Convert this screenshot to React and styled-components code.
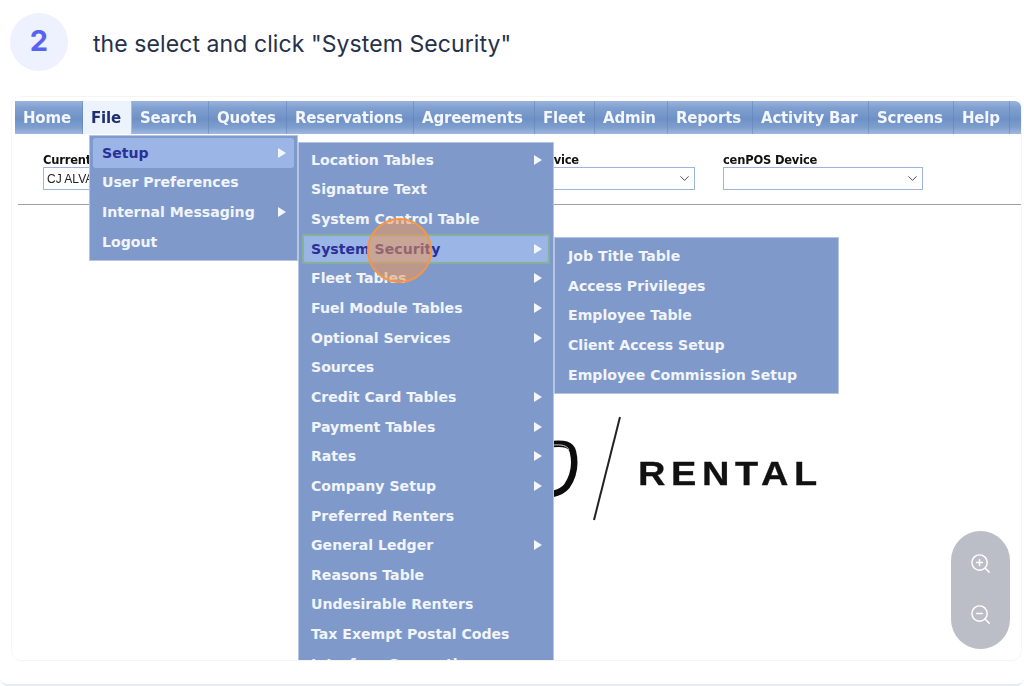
import React from 'react';
import styled, { createGlobalStyle } from 'styled-components';
import { ZoomIn, ZoomOut, ChevronDown } from 'lucide-react';

const Global = createGlobalStyle`
  html, body { margin: 0; padding: 0; background: #fff; }
  body { width: 1024px; height: 686px; overflow: hidden; }
`;

const Page = styled.div`
  width: 1024px;
  height: 686px;
  box-sizing: border-box;
  padding: 13px 2px 0 10px;
  border-bottom: 2px solid #e9eaf1;
  border-radius: 0 0 8px 8px;
  display: flex;
  flex-direction: column;
  gap: 25px;
`;

const Header = styled.header`
  display: flex;
  align-items: center;
  gap: 25px;
  height: 58px;
`;

const Badge = styled.div`
  width: 58px;
  height: 58px;
  border-radius: 50%;
  background: #eef1fe;
  color: #5a62f0;
  display: flex;
  align-items: center;
  justify-content: center;
  font: 700 29px "Inter", sans-serif;
  padding-bottom: 3px;
  box-sizing: border-box;
`;

const Title = styled.h2`
  margin: 0;
  padding-top: 3px;
  font: 400 23px "Inter", sans-serif;
  color: #26304a;
  letter-spacing: 0.08px;
`;

const Frame = styled.div`
  position: relative;
  height: 565px;
  box-sizing: border-box;
  padding: 4px 0 0 3px;
  margin-left: 1px;
  border: 1px solid #f5f5f6;
  border-radius: 10px;
  overflow: hidden;
`;

const Shot = styled.div`
  filter: blur(0.35px);
  height: 100%;
`;

const Bar = styled.nav`
  display: flex;
  height: 33px;
  background: linear-gradient(#9ab3dc 0%, #7f9fcf 22%, #6e91c5 55%, #7e9ece 80%, #a0b8e0 100%);
  border-radius: 0 6px 0 0;
`;

const BarItem = styled.div`
  width: ${p => p.$w}px;
  box-sizing: border-box;
  padding-left: 8px;
  display: flex;
  align-items: center;
  font: 700 15px "DejaVu Sans", sans-serif;
  letter-spacing: -0.2px;
  white-space: nowrap;
  color: ${p => (p.$active ? '#1f2f6f' : '#f3f6fc')};
  background: ${p => (p.$active ? '#edf3fd' : 'transparent')};
  border-right: 1px solid rgba(90, 125, 180, 0.45);
`;

const Form = styled.div`
  display: flex;
  gap: 28px;
  padding: 19px 0 0 25px;
  height: 71px;
  box-sizing: border-box;
  border-bottom: 1px solid #a0a0a0;
  margin-left: 3px;
`;

const Field = styled.div`
  width: ${p => p.$w}px;
  display: flex;
  flex-direction: column;
`;

const FieldLabel = styled.label`
  font: 700 11.5px "DejaVu Sans", sans-serif;
  letter-spacing: -0.2px;
  line-height: 14px;
  color: #111;
  white-space: nowrap;
`;

const SelectBox = styled.div`
  height: 23px;
  box-sizing: border-box;
  border: 1px solid #9db4dc;
  background: #fff;
  display: flex;
  align-items: center;
  justify-content: space-between;
  padding: 0 2px 0 3px;
  font: 400 12px "Liberation Sans", sans-serif;
  color: #222;
`;

const LogoRow = styled.div`
  display: flex;
  align-items: center;
  padding: 210px 0 0 538px;
`;

const LogoText = styled.span`
  font: 700 33px "Liberation Sans", sans-serif;
  letter-spacing: 4.9px;
  -webkit-text-stroke: 0.3px #111;
  color: #111;
  margin: 11px 0 0 15px;
  transform: scaleX(1.15);
  transform-origin: left center;
`;

const Menu = styled.div`
  position: absolute;
  left: ${p => p.$x}px;
  top: ${p => p.$y}px;
  width: ${p => p.$w}px;
  height: ${p => p.$h}px;
  box-sizing: border-box;
  overflow: hidden;
  background: #7f9aca;
  border: 1px solid #b5c5e3;
  border-bottom-width: ${p => (p.$clip ? 0 : 1)}px;
  padding: ${p => p.$pad}px ${p => p.$side}px 0;
`;

const Row = styled.div`
  height: 29.65px;
  box-sizing: border-box;
  display: flex;
  align-items: center;
  justify-content: space-between;
  padding: 0 8px 0 9px;
  font: 700 14.1px "DejaVu Sans", sans-serif;
  white-space: nowrap;
  border-radius: 3px;
  color: ${p => (p.$on ? '#2b2f97' : '#f1f4fb')};
  background: ${p => (p.$on ? '#9bb6e6' : 'transparent')};
  box-shadow: ${p => (p.$ring ? 'inset 0 0 1px 2px #84b09a' : 'none')};
`;

const Arrow = styled.i`
  width: 0;
  height: 0;
  border-left: 8px solid #f4f6fb;
  border-top: 5px solid transparent;
  border-bottom: 5px solid transparent;
`;

const Cursor = styled.div`
  position: absolute;
  left: 355px;
  top: 121px;
  width: 65px;
  height: 65px;
  box-sizing: border-box;
  border-radius: 50%;
  border: 2px solid #f4964a;
  background: rgba(244, 150, 80, 0.52);
`;

const ZoomPill = styled.div`
  position: absolute;
  left: 939px;
  top: 434px;
  width: 59px;
  height: 118px;
  border-radius: 30px;
  background: #bbbec6;
  display: flex;
  flex-direction: column;
  align-items: center;
  justify-content: center;
  gap: 28px;
  padding-bottom: 2px;
  box-sizing: border-box;
  color: #fff;
`;

const fileItems = [['Setup', 1], ['User Preferences'], ['Internal Messaging', 1], ['Logout']];
const setupItems = [
  ['Location Tables', 1], ['Signature Text'], ['System Control Table'], ['System Security', 1],
  ['Fleet Tables', 1], ['Fuel Module Tables', 1], ['Optional Services', 1], ['Sources'],
  ['Credit Card Tables', 1], ['Payment Tables', 1], ['Rates', 1], ['Company Setup', 1],
  ['Preferred Renters'], ['General Ledger', 1], ['Reasons Table'], ['Undesirable Renters'],
  ['Tax Exempt Postal Codes'], ['Interface Connections'],
];
const securityItems = ['Job Title Table', 'Access Privileges', 'Employee Table', 'Client Access Setup', 'Employee Commission Setup'];
const tabs = [
  ['Home', 68], ['File', 49], ['Search', 77], ['Quotes', 78], ['Reservations', 127], ['Agreements', 121],
  ['Fleet', 60], ['Admin', 73], ['Reports', 85], ['Activity Bar', 116], ['Screens', 85], ['Help', 56],
];

export default function App() {
  return (
    <Page>
      <Global />
      <Header>
        <Badge>2</Badge>
        <Title>the select and click "System Security"</Title>
      </Header>
      <Frame>
        <Shot>
          <Bar>
            {tabs.map(([t, w]) => <BarItem key={t} $w={w} $active={t === 'File'}>{t}</BarItem>)}
          </Bar>
          <Form>
            <Field $w={198}>
              <FieldLabel>Current Location</FieldLabel>
              <SelectBox>CJ ALVARADO</SelectBox>
            </Field>
            <Field $w={198}>
              <FieldLabel>Current Printer</FieldLabel>
              <SelectBox />
            </Field>
            <Field $w={200}>
              <FieldLabel>Swipe Device</FieldLabel>
              <SelectBox><span /><ChevronDown size={15} strokeWidth={1.3} /></SelectBox>
            </Field>
            <Field $w={200}>
              <FieldLabel>cenPOS Device</FieldLabel>
              <SelectBox><span /><ChevronDown size={15} strokeWidth={1.3} /></SelectBox>
            </Field>
          </Form>
          <LogoRow>
            <svg width="70" height="106" viewBox="0 0 70 106" aria-hidden="true">
              <path d="M-1 29 C11 28 18 29 20 37 C23 50 20 62 14 71 C10 76 5 78 -1 79" fill="none" stroke="#0c0c0c" strokeWidth="6.5" />
              <path d="M0 30 C8 29.5 14 30 16 35" fill="none" stroke="#ccc" strokeWidth="1" />
              <path d="M67 2 L41 105" stroke="#222" strokeWidth="2" />
            </svg>
            <LogoText>RENTAL</LogoText>
          </LogoRow>
        </Shot>
        <Menu $x={77} $y={38} $w={209} $h={126} $pad={2} $side={3}>
          {fileItems.map(([t, a], i) => <Row key={t} $on={i === 0}>{t}{a && <Arrow />}</Row>)}
        </Menu>
        <Menu $x={286} $y={45} $w={256} $h={518} $pad={2} $side={3} $clip>
          {setupItems.map(([t, a]) => (
            <Row key={t} $on={t === 'System Security'} $ring={t === 'System Security'}>{t}{a && <Arrow />}</Row>
          ))}
        </Menu>
        <Menu $x={542} $y={140} $w={285} $h={157} $pad={3.3} $side={4}>
          {securityItems.map(t => <Row key={t}>{t}</Row>)}
        </Menu>
        <Cursor />
        <ZoomPill>
          <ZoomIn size={23} strokeWidth={1.5} />
          <ZoomOut size={23} strokeWidth={1.5} />
        </ZoomPill>
      </Frame>
    </Page>
  );
}
